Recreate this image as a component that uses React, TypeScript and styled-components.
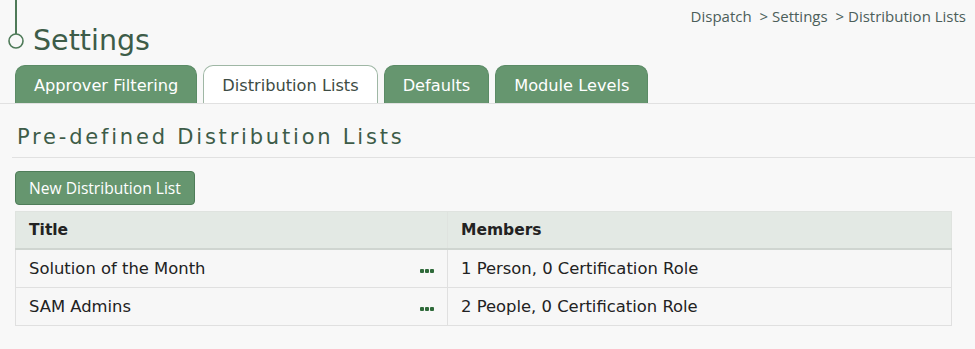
import React from "react";
import styled, { createGlobalStyle } from "styled-components";

const GlobalStyle = createGlobalStyle`
    body {
        margin: 0;
        background: #f8f8f8;
        font-family: "DejaVu Sans", sans-serif;
    }
`;

const tabs = ["Approver Filtering", "Distribution Lists", "Defaults", "Module Levels"];

const lists = [
    { title: "Solution of the Month", members: "1 Person, 0 Certification Role" },
    { title: "SAM Admins", members: "2 People, 0 Certification Role" },
];

function App() {
    const active = "Distribution Lists";

    return (
        <Page>
            <GlobalStyle />
            <Header>
                <TitleWrap>
                    <svg width="18" height="50" viewBox="0 0 18 50">
                        <line x1="8" y1="0" x2="8" y2="34" stroke="#4e7a58" strokeWidth="2" />
                        <circle cx="8" cy="41" r="7" fill="none" stroke="#4e7a58" strokeWidth="1.6" />
                    </svg>
                    <Title>Settings</Title>
                </TitleWrap>
                <Breadcrumb>
                    Dispatch <Sep>&gt;</Sep> Settings <Sep>&gt;</Sep> Distribution Lists
                </Breadcrumb>
            </Header>

            <TabBar>
                {tabs.map((t) => (
                    <Tab key={t} $active={t === active}>
                        {t}
                    </Tab>
                ))}
            </TabBar>

            <SectionTitle>Pre-defined Distribution Lists</SectionTitle>

            <NewButton>New Distribution List</NewButton>

            <Table>
                <thead>
                    <tr>
                        <Th style={{ width: "405px" }}>Title</Th>
                        <Th>Members</Th>
                    </tr>
                </thead>
                <tbody>
                    {lists.map((l) => (
                        <tr key={l.title}>
                            <Td>
                                <TitleCell>
                                    {l.title}
                                    <Dots>
                                        <i />
                                        <i />
                                        <i />
                                    </Dots>
                                </TitleCell>
                            </Td>
                            <Td>{l.members}</Td>
                        </tr>
                    ))}
                </tbody>
            </Table>
        </Page>
    );
}

export default App;

const Page = styled.div`
    width: 975px;
    height: 349px;
    overflow: hidden;
`;

const Header = styled.div`
    display: flex;
    justify-content: space-between;
    align-items: flex-start;
    height: 65px;
`;

const TitleWrap = styled.div`
    display: flex;
    align-items: flex-start;
    padding-left: 8px;
    svg {
        display: block;
        flex-shrink: 0;
    }
`;

const Title = styled.h1`
    margin: 21px 0 0 7px;
    font-family: "DejaVu Sans", sans-serif;
    font-weight: normal;
    font-size: 28.5px;
    line-height: 40px;
    color: #3d5c48;
`;

const Breadcrumb = styled.div`
    margin: 6px 9px 0 0;
    font-family: "Open Sans", sans-serif;
    font-size: 15px;
    color: #4c5e5a;
`;

const Sep = styled.span`
    margin-left: 4px;
`;

const TabBar = styled.div`
    display: flex;
    gap: 6px;
    padding-left: 15px;
    height: 38px;
    border-bottom: 1px solid #e1e1e1;
`;

const Tab = styled.div<{ $active?: boolean }>`
    display: flex;
    align-items: center;
    height: 38px;
    box-sizing: border-box;
    padding: 2px 18px 0 18px;
    border: 1px solid ${(p) => (p.$active ? "#9fb7a5" : "#5b8b66")};
    border-bottom: none;
    border-radius: 10px 10px 0 0;
    background: ${(p) => (p.$active ? "#ffffff" : "#66966f")};
    color: ${(p) => (p.$active ? "#3e4c44" : "#ffffff")};
    font-family: "DejaVu Sans", sans-serif;
    font-size: 16.2px;
`;

const SectionTitle = styled.h2`
    margin: 0 0 0 12px;
    padding: 21px 0 8px 5px;
    border-bottom: 1px solid #e1e1e1;
    font-family: "DejaVu Sans", sans-serif;
    font-weight: normal;
    font-size: 21px;
    letter-spacing: 2.8px;
    color: #3d5c48;
`;

const NewButton = styled.button`
    display: block;
    margin: 13px 0 6px 15px;
    height: 34px;
    padding: 0 13px;
    border: 1px solid #4f7d59;
    border-radius: 4px;
    background: #66966f;
    color: #ffffff;
    font-family: "Open Sans", sans-serif;
    font-size: 15.6px;
`;

const Table = styled.table`
    margin-left: 15px;
    width: 937px;
    border-collapse: collapse;
    font-family: "DejaVu Sans", sans-serif;
    font-size: 16.4px;
    color: #222;
`;

const Th = styled.th`
    height: 36px;
    padding: 0 13px;
    text-align: left;
    font-weight: bold;
    font-size: 15.5px;
    background: #e3e9e4;
    border: 1px solid #dfe3df;
    border-bottom: 2px solid #cfd5d0;
`;

const Td = styled.td`
    height: 37px;
    padding: 0 13px;
    border: 1px solid #e0e0e0;
    background: #f7f7f7;
`;

const TitleCell = styled.div`
    display: flex;
    justify-content: space-between;
    align-items: center;
`;

const Dots = styled.span`
    display: flex;
    gap: 1px;
    margin-top: 5px;
    i {
        display: block;
        width: 4px;
        height: 4px;
        border-radius: 1px;
        background: #2f6a3a;
    }
`;
